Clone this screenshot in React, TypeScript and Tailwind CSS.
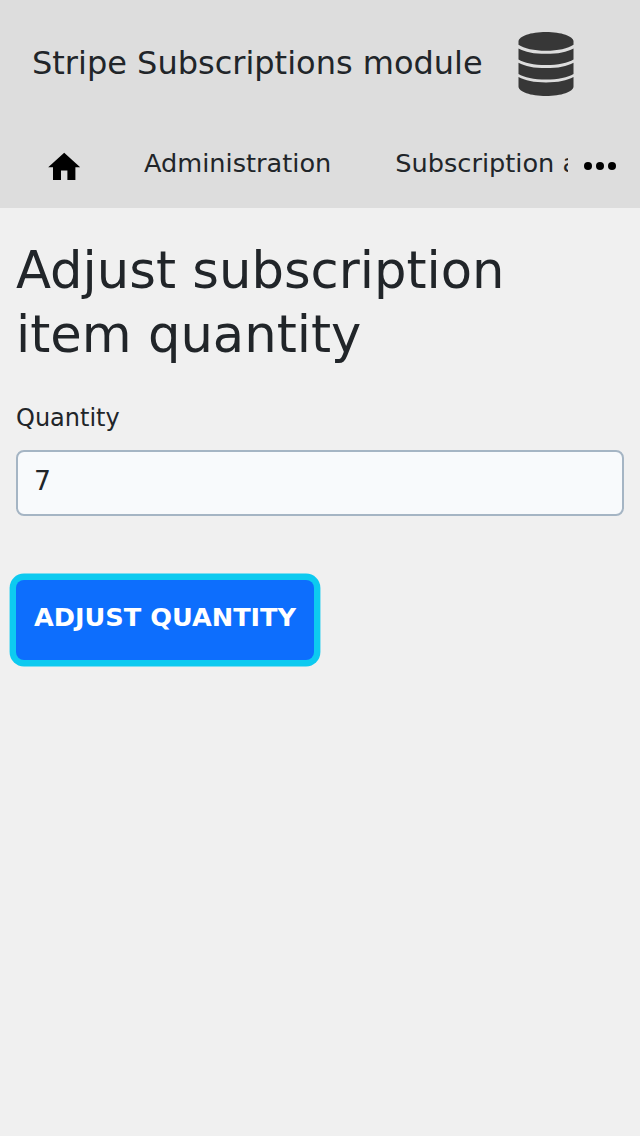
export default function App() {
  return (
    <div className="flex min-h-[1136px] w-[640px] flex-col bg-[#f0f0f0] font-['DejaVu_Sans',sans-serif] text-[#212529]">
      <header className="flex h-[208px] flex-col bg-[#dddddd]">
        <div className="flex h-32 items-center pl-8">
          <span className="w-[482px] pb-0.5 text-[32px] leading-[48px] whitespace-nowrap">Stripe Subscriptions module</span>
          <svg className="h-16 w-16 shrink-0" viewBox="0 0 64 64" fill="#373737">
            <path d="M32 0C47.300 0 59.500 4.200 59.500 9.500V12.800C54 16.600 44 18.800 32 18.800S10 16.600 4.500 12.800V9.500C4.500 4.200 16.700 0 32 0Z" />
            <path d="M4.500 16.400C11 20 20 21.800 32 21.800S53 20 59.500 16.400V27.500C54 31 44 33.100 32 33.100S10 31 4.500 27.500Z" />
            <path d="M4.500 30.700C11 34.300 20 36.100 32 36.100S53 34.300 59.500 30.700V41.900C54 45.400 44 47.500 32 47.500S10 45.400 4.500 41.900Z" />
            <path d="M4.500 45.100C11 48.700 20 50.500 32 50.500S53 48.700 59.500 45.100V54.500C59.500 59.800 47.300 64 32 64S4.500 59.800 4.500 54.500Z" />
          </svg>
        </div>
        <nav className="flex h-20 items-center pb-1">
          <svg className="mt-[1.8px] ml-[44.8px] h-[38.4px] w-[38.4px] shrink-0" viewBox="0 0 24 24"><path d="M10 20v-6h4v6h5v-8h3L12 3 2 12h3v8z" /></svg>
          <div className="ml-[60.8px] flex w-[424px] gap-16 overflow-hidden pb-1.5 text-[25.6px] whitespace-nowrap">
            <span>Administration</span><span>Subscription administration</span>
          </div>
          <svg className="ml-2 h-12 w-12 shrink-0" viewBox="0 0 48 48"><circle cx="12" cy="24" r="4" /><circle cx="24" cy="24" r="4" /><circle cx="36" cy="24" r="4" /></svg>
        </nav>
      </header>
      <main className="flex flex-col items-start px-4 pt-[30px]">
        <h1 className="w-[608px] text-[51.2px] leading-[64px]">Adjust subscription<br />item quantity</h1>
        <label htmlFor="quantity" className="mt-[34px] text-[24px] leading-[36px]">Quantity</label>
        <input id="quantity" defaultValue="7" className="mt-3.5 h-[66px] w-full rounded-lg border-2 border-[#a5b5c4] bg-[#f8fafc] px-4 pb-1.5 text-[26.67px] outline-none" />
        <button className="mt-16 h-20 rounded-lg bg-[#0d6efd] px-[18px] pb-1.5 text-[25.6px] font-bold whitespace-nowrap text-white shadow-[0_0_0_6.4px_#0dcaf0]">ADJUST QUANTITY</button>
      </main>
    </div>
  );
}
